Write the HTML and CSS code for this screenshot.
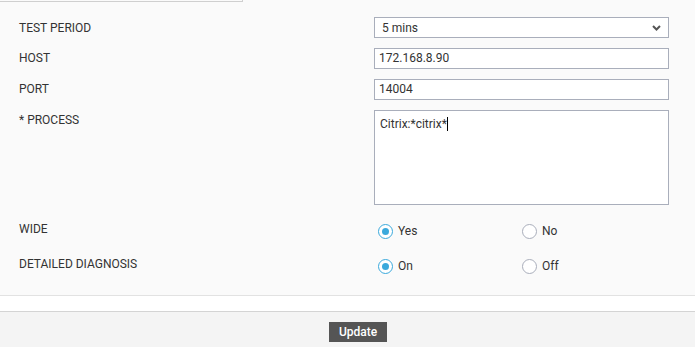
FILE: index.html
```html
<!DOCTYPE html>
<html lang="en">

<head>
    <meta charset="UTF-8">
    <meta name="viewport" content="width=device-width, initial-scale=1.0">
    <title>Test configuration</title>
    <link rel="stylesheet" href="styles.css">
</head>

<body>
    <div class="tab-edge"></div>

    <div class="form">
        <div class="row">
            <label class="label first-label">TEST PERIOD</label>
            <div class="field">
                <div class="select">
                    <span>5 mins</span>
                    <svg class="chevron" width="9" height="6" viewBox="0 0 9 6">
                        <path d="M1 1 L4.5 4.5 L8 1" fill="none" stroke="#555" stroke-width="2"/>
                    </svg>
                </div>
            </div>
        </div>

        <div class="row">
            <label class="label">HOST</label>
            <div class="field">
                <div class="input">172.168.8.90</div>
            </div>
        </div>

        <div class="row">
            <label class="label">PORT</label>
            <div class="field">
                <div class="input">14004</div>
            </div>
        </div>

        <div class="row">
            <label class="label">* PROCESS</label>
            <div class="field">
                <div class="textarea">Citrix:*citrix*<span class="caret"></span></div>
            </div>
        </div>

        <div class="row radio-row first-radio">
            <label class="label">WIDE</label>
            <div class="field options">
                <div class="option"><span class="radio checked"></span>Yes</div>
                <div class="option"><span class="radio"></span>No</div>
            </div>
        </div>

        <div class="row radio-row">
            <label class="label">DETAILED DIAGNOSIS</label>
            <div class="field options">
                <div class="option"><span class="radio checked"></span>On</div>
                <div class="option"><span class="radio"></span>Off</div>
            </div>
        </div>
    </div>

    <div class="spacer"></div>

    <div class="footer">
        <button class="update-btn">Update</button>
    </div>
</body>

</html>
```

FILE: styles.css
```css
body {
    margin: 0;
    padding: 0;
    font-family: Roboto, "Liberation Sans", Arial, sans-serif;
    font-size: 12px;
    color: #333;
    background-color: #fafafa;
}

.tab-edge {
    width: 242px;
    height: 1px;
    border-right: 1px solid #cfcfcf;
    border-bottom: 1px solid #cfcfcf;
}

.form {
    padding: 15px 0 0 19px;
    height: 294px;
    box-sizing: border-box;
    border-bottom: 1px solid #e2e2e2;
}

.row {
    display: flex;
    align-items: flex-start;
    margin-bottom: 10px;
}

.label {
    width: 355px;
    line-height: 21px;
    color: #333;
}

/* sits a little lower than the select box */
.first-label {
    line-height: 23px;
    margin-bottom: -2px;
}

.field {
    width: 295px;
}

.select,
.input,
.textarea {
    box-sizing: border-box;
    width: 295px;
    border: 1px solid #a9aebb;
    background-color: #fff;
    color: #333;
}

.select {
    height: 21px;
    padding: 0 6px 0 7px;
    display: flex;
    align-items: center;
    justify-content: space-between;
}

.chevron {
    margin-right: 1px;
}

.input {
    height: 21px;
    line-height: 19px;
    padding-left: 4px;
}

.textarea {
    height: 95px;
    padding: 6px 5px;
    line-height: 15px;
}

.caret {
    display: inline-block;
    width: 1px;
    height: 14px;
    background-color: #000;
    vertical-align: -3px;
}

/* radio rows */
.first-radio {
    padding-top: 3px;
}

.radio-row .label {
    line-height: 23px;
}

.options {
    display: flex;
    padding-left: 4px;
    padding-top: 2px;
}

.option {
    width: 144px;
    display: flex;
    align-items: center;
    line-height: 23px;
    color: #333;
}

.radio {
    box-sizing: border-box;
    width: 15px;
    height: 15px;
    border-radius: 50%;
    border: 1px solid #a9aebb;
    background-color: #fff;
    margin-right: 5px;
    position: relative;
}

.radio.checked {
    border: 1.5px solid #3aa9dc;
}

.radio.checked::after {
    content: "";
    position: absolute;
    left: 2.5px;
    top: 2.5px;
    width: 7px;
    height: 7px;
    border-radius: 50%;
    background-color: #3aa9dc;
}

.spacer {
    height: 15px;
    background-color: #fff;
    border-bottom: 1px solid #d4d4d4;
}

.footer {
    background-color: #f4f4f4;
    height: 40px;
    padding: 10px 0 0 329px;
    box-sizing: border-box;
}

.update-btn {
    width: 58px;
    height: 20px;
    border: none;
    border-radius: 0;
    background-color: #555;
    color: #fff;
    font-family: Roboto, "Liberation Sans", Arial, sans-serif;
    font-size: 12px;
    font-weight: 500;
    padding: 0;
    cursor: pointer;
}
```
